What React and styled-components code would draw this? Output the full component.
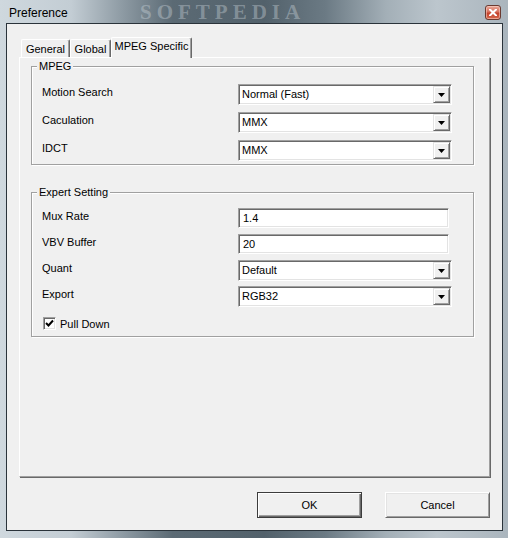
import React from "react";
import styled, { createGlobalStyle } from "styled-components";

const GlobalStyle = createGlobalStyle`
  html, body { margin: 0; padding: 0; }
  body {
    width: 508px;
    height: 538px;
    overflow: hidden;
    font-family: "Liberation Sans", Arial, sans-serif;
    font-size: 11px;
    color: #000;
  }
`;

const Frame = styled.div`
  position: relative;
  width: 508px;
  height: 538px;
  box-sizing: border-box;
  display: flex;
  flex-direction: column;
  padding: 0 5px 7px 6px;
  overflow: hidden;
  background: linear-gradient(
    90deg,
    #cfd8de 0%,
    #c3cdd4 14%,
    #8e9ba4 24%,
    #5b6a74 34%,
    #52616b 52%,
    #6b7a84 64%,
    #a3afb7 76%,
    #bcc6cd 86%,
    #aab5bd 100%
  );
`;

const TitleBar = styled.div`
  position: relative;
  height: 23px;
  display: flex;
  align-items: flex-start;
  padding-left: 3px;
`;

const TitleText = styled.span`
  position: relative;
  z-index: 1;
  margin-top: 6px;
  font-family: "Liberation Sans", Arial, sans-serif;
  font-size: 12px;
  line-height: 14px;
  color: #000;
`;

const Watermark = styled.span`
  position: absolute;
  left: 134px;
  top: 1px;
  font-family: "Liberation Serif", "Times New Roman", serif;
  font-weight: bold;
  font-size: 21px;
  line-height: 22px;
  letter-spacing: 5px;
  color: rgba(205, 214, 220, 0.4);
  pointer-events: none;
  white-space: nowrap;
`;

const CloseButton = styled.div`
  margin: 5px 2px 0 auto;
  width: 16px;
  height: 15px;
  box-sizing: border-box;
  border: 1px solid #6b3a30;
  border-radius: 3px;
  background: linear-gradient(180deg, #e9a99a 0%, #d8705c 45%, #c4402a 55%, #d66a4e 100%);
  display: flex;
  align-items: center;
  justify-content: center;
  box-shadow: inset 0 0 0 1px rgba(255, 220, 210, 0.5);
`;

const Client = styled.div`
  flex: 1;
  display: flex;
  flex-direction: column;
  border: 1px solid #2a333a;
  background: #f0f0f0;
  padding: 13px 12px 12px 12px;
`;

const TabStrip = styled.div`
  position: relative;
  z-index: 1;
  display: flex;
  align-items: flex-end;
  height: 21px;
  margin: 0 0 -1px 2px;
`;

const Tab = styled.div`
  box-sizing: border-box;
  width: ${(p) => p.$w}px;
  height: ${(p) => (p.$active ? 21 : 18)}px;
  margin-bottom: ${(p) => (p.$active ? 0 : 1)}px;
  background: #f0f0f0;
  border-top: 1px solid #fff;
  border-left: 1px solid #fff;
  border-right: 1px solid #696969;
  box-shadow: inset -1px 0 0 #a0a0a0;
  border-radius: 2px 2px 0 0;
  text-align: center;
  line-height: ${(p) => (p.$active ? 16 : 18)}px;
  font-size: 11px;
  white-space: nowrap;
`;

const Panel = styled.div`
  flex: 1;
  display: flex;
  flex-direction: column;
  align-items: flex-start;
  border: 1px solid;
  border-color: #fff #a0a0a0 #a0a0a0 #fff;
  box-shadow: 1px 1px 0 #696969;
  padding: 0 0 0 11px;
`;

const Group = styled.div`
  box-sizing: border-box;
  width: 443px;
  margin-top: ${(p) => p.$top}px;
  display: flex;
  flex-direction: column;
  border: 1px solid #a0a0a0;
  box-shadow: inset 1px 1px 0 #fff, 1px 1px 0 #fff;
  padding-bottom: ${(p) => p.$bottom}px;
`;

const Caption = styled.div`
  align-self: flex-start;
  margin: -7px 0 0 5px;
  padding: 0 2px;
  background: #f0f0f0;
  line-height: 13px;
  font-size: 11px;
`;

const Rows = styled.div`
  display: flex;
  flex-direction: column;
  margin-top: ${(p) => p.$top}px;
  padding-left: 10px;
`;

const Row = styled.div`
  display: flex;
  align-items: flex-start;
  height: ${(p) => p.$h}px;
`;

const Label = styled.div`
  width: 196px;
  padding-top: 2px;
  line-height: 13px;
  font-size: 11px;
`;

const sunken = `
  box-sizing: border-box;
  border: 1px solid;
  border-color: #a0a0a0 #fff #fff #a0a0a0;
  box-shadow: inset 1px 1px 0 #696969, inset -1px -1px 0 #e3e3e3;
  background: #fff;
`;

const Combo = styled.div`
  ${sunken}
  width: 214px;
  height: 21px;
  display: flex;
  align-items: center;
  padding: 2px 1px 2px 3px;
`;

const ComboText = styled.span`
  flex: 1;
  font-size: 11px;
  line-height: 13px;
`;

const DropButton = styled.div`
  box-sizing: border-box;
  width: 17px;
  height: 17px;
  border: 1px solid;
  border-color: #e3e3e3 #696969 #696969 #e3e3e3;
  box-shadow: inset 1px 1px 0 #fff, inset -1px -1px 0 #a0a0a0;
  background: #f0f0f0;
  display: flex;
  align-items: center;
  justify-content: center;
`;

const Edit = styled.div`
  ${sunken}
  width: 211px;
  height: 20px;
  display: flex;
  align-items: center;
  padding-left: 4px;
  font-size: 11px;
`;

const CheckRow = styled.label`
  display: flex;
  align-items: center;
  margin: 10px 0 0 11px;
  height: 13px;
  font-size: 11px;
  gap: 4px;
`;

const CheckBox = styled.span`
  ${sunken}
  width: 13px;
  height: 13px;
  display: flex;
  align-items: center;
  justify-content: center;
`;

const ButtonRow = styled.div`
  display: flex;
  justify-content: flex-end;
  gap: 23px;
  margin-top: 15px;
`;

const Button = styled.div`
  box-sizing: border-box;
  width: 105px;
  height: 26px;
  display: flex;
  align-items: center;
  justify-content: center;
  font-size: 11px;
  background: #f0f0f0;
  border: 1px solid;
  border-color: ${(p) => (p.$default ? "#3c3c3c" : "#fff #696969 #696969 #fff")};
  box-shadow: ${(p) =>
    p.$default
      ? "inset 1px 1px 0 #fff, inset -1px -1px 0 #696969, inset -2px -2px 0 #a0a0a0"
      : "inset 1px 1px 0 #e3e3e3, inset -1px -1px 0 #a0a0a0"};
`;

const Arrow = () => (
  <svg width="7" height="4" viewBox="0 0 7 4">
    <polygon points="0,0 7,0 3.5,4" fill="#000" />
  </svg>
);

const Check = () => (
  <svg width="9" height="9" viewBox="0 0 9 9">
    <polyline points="1,4 3.5,6.5 8,1.5" fill="none" stroke="#000" strokeWidth="2" />
  </svg>
);

const Cross = () => (
  <svg width="8" height="7" viewBox="0 0 8 7">
    <path d="M1 0.5 L7 6.5 M7 0.5 L1 6.5" stroke="#fff" strokeWidth="2" strokeLinecap="square" />
  </svg>
);

const ComboBox = ({ value }) => (
  <Combo>
    <ComboText>{value}</ComboText>
    <DropButton>
      <Arrow />
    </DropButton>
  </Combo>
);

const mpegRows = [
  ["Motion Search", "Normal (Fast)", 28],
  ["Caculation", "MMX", 28],
  ["IDCT", "MMX", 21],
];

const App = () => (
  <>
    <GlobalStyle />
    <Frame>
      <TitleBar>
        <Watermark>SOFTPEDIA</Watermark>
        <TitleText>Preference</TitleText>
        <CloseButton>
          <Cross />
        </CloseButton>
      </TitleBar>
      <Client>
        <TabStrip>
          <Tab $w={49}>General</Tab>
          <Tab $w={41}>Global</Tab>
          <Tab $w={81} $active>
            MPEG Specific
          </Tab>
        </TabStrip>
        <Panel>
          <Group $top={8} $bottom={3}>
            <Caption>MPEG</Caption>
            <Rows $top={11}>
              {mpegRows.map(([label, value, h]) => (
                <Row key={label} $h={h}>
                  <Label>{label}</Label>
                  <ComboBox value={value} />
                </Row>
              ))}
            </Rows>
          </Group>
          <Group $top={27} $bottom={6}>
            <Caption>Expert Setting</Caption>
            <Rows $top={9}>
              <Row $h={26}>
                <Label>Mux Rate</Label>
                <Edit>1.4</Edit>
              </Row>
              <Row $h={26}>
                <Label>VBV Buffer</Label>
                <Edit>20</Edit>
              </Row>
              <Row $h={26}>
                <Label>Quant</Label>
                <ComboBox value="Default" />
              </Row>
              <Row $h={21}>
                <Label>Export</Label>
                <ComboBox value="RGB32" />
              </Row>
            </Rows>
            <CheckRow>
              <CheckBox>
                <Check />
              </CheckBox>
              Pull Down
            </CheckRow>
          </Group>
        </Panel>
        <ButtonRow>
          <Button $default>OK</Button>
          <Button>Cancel</Button>
        </ButtonRow>
      </Client>
    </Frame>
  </>
);

export default App;
